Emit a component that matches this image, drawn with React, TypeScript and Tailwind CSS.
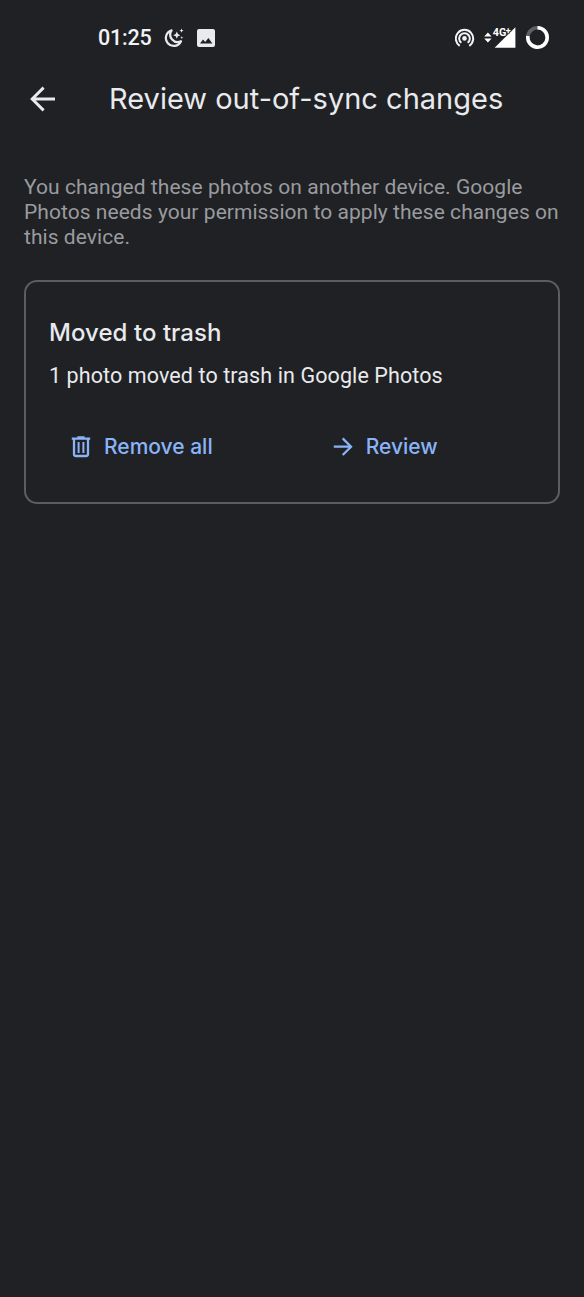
import type { ReactNode } from "react";

const MoonIcon = () => (
  <svg width="20" height="20" viewBox="0 0 20 20" fill="none">
    <path
      d="M7.6 2.4A7.9 7.9 0 1 0 17 13.2A7.4 7.4 0 0 1 7.6 2.4Z"
      stroke="#e8eaed"
      strokeWidth="2.2"
      strokeLinejoin="round"
    />
    <path
      d="M12.8 3.6l1.1 2.5 2.5 1.1-2.5 1.1-1.1 2.5-1.1-2.5-2.5-1.1 2.5-1.1zM17.5.6l.6 1.5 1.5.6-1.5.6-.6 1.5-.6-1.5-1.5-.6 1.5-.6zM17.8 8l.4 1.2 1.2.4-1.2.4-.4 1.2-.4-1.2-1.2-.4 1.2-.4z"
      fill="#e8eaed"
    />
  </svg>
);

const PictureIcon = () => (
  <svg width="18" height="18" viewBox="0 0 18 18">
    <path
      fillRule="evenodd"
      fill="#e8eaed"
      d="M2 0h14a2 2 0 0 1 2 2v14a2 2 0 0 1-2 2H2a2 2 0 0 1-2-2V2a2 2 0 0 1 2-2zM3 14.4h12.4l-4-5.4-3.2 4-2.2-2.6z"
    />
  </svg>
);

const HotspotIcon = () => (
  <svg width="20" height="20" viewBox="0 0 20 20" fill="none">
    <circle cx="9.5" cy="10.4" r="2.3" fill="#f1f3f4" />
    <path
      d="M6.4 14.8a5.3 5.3 0 1 1 6.2 0M4.7 17.8a8.7 8.7 0 1 1 9.6 0"
      stroke="#f1f3f4"
      strokeWidth="2"
    />
  </svg>
);

const SignalIcon = () => (
  <svg width="33" height="22" viewBox="0 0 33 22" fill="#fff">
    <path d="M3.9 5.4l3.7 4.2H.2zM3.9 15.6l3.7-4.2H.2z" />
    <path d="M31.4.2v20.6H10.6z" />
    <text
      x="8.8"
      y="8.7"
      fontFamily="Roboto, sans-serif"
      fontSize="10.8"
      fontWeight="700"
      stroke="#202124"
      strokeWidth="1.4"
      paintOrder="stroke"
    >
      4G
      <tspan dx="-0.6" dy="-1.8" fontSize="9">
        +
      </tspan>
    </text>
  </svg>
);

const BatteryIcon = () => (
  <svg width="24" height="24" viewBox="0 0 24 24" fill="none" strokeWidth="3.6">
    <circle cx="11.5" cy="11.5" r="9.7" stroke="#5f6063" />
    <path d="M11.5 1.8A9.7 9.7 0 1 1 1.9 10.1" stroke="#fff" />
  </svg>
);

const TrashIcon = () => (
  <svg width="20" height="22" viewBox="0 0 20 22" fill="none" stroke="#8ab4f8">
    <path
      d="M.8 2.6h18.4M6.4 1.4h7.2M3 3v15a2 2 0 0 0 2 2h10a2 2 0 0 0 2-2V3"
      strokeWidth="2.3"
    />
    <path d="M7.6 6v11M12.4 6v11" strokeWidth="2" />
  </svg>
);

const ArrowRightIcon = () => (
  <svg width="20" height="20" viewBox="0 0 20 20" fill="none">
    <path
      d="M.8 9.7h16.8M9.7 1.4l8.3 8.3-8.3 8.3"
      stroke="#8ab4f8"
      strokeWidth="2.3"
    />
  </svg>
);

const CardAction = ({ icon, label }: { icon: ReactNode; label: string }) => (
  <button className="flex items-center gap-[13px] text-[#8ab4f8]">
    {icon}
    <span className="font-[Inter,sans-serif] text-[21px] leading-7 font-medium whitespace-nowrap">
      {label}
    </span>
  </button>
);

export default function App() {
  return (
    <div className="flex h-[1297px] w-[584px] flex-col overflow-hidden bg-[#202124] font-[Roboto,sans-serif] text-[#e8eaed]">
      {/* Status bar */}
      <div className="flex h-[75px] items-center pr-[34px] pl-[98px]">
        <span className="w-[66px] text-[21.5px] leading-7 font-medium tracking-[-0.2px] text-[#f1f3f4]">
          01:25
        </span>
        <MoonIcon />
        <div className="ml-[13px]">
          <PictureIcon />
        </div>
        <div className="ml-auto flex items-center">
          <HotspotIcon />
          <div className="ml-[9px]">
            <SignalIcon />
          </div>
          <div className="ml-[9px]">
            <BatteryIcon />
          </div>
        </div>
      </div>

      {/* App bar */}
      <header className="flex h-12 items-center pl-[30px]">
        <svg width="26" height="26" viewBox="0 0 26 26" fill="none">
          <path
            d="M25 13H3M13.6 1.6L2.2 13l11.4 11.4"
            stroke="#e8eaed"
            strokeWidth="2.9"
          />
        </svg>
        <h1 className="ml-[53px] font-[Inter,sans-serif] text-[29px] leading-9 whitespace-nowrap">
          Review out-of-sync changes
        </h1>
      </header>

      <main className="px-6 pt-[52px]">
        <p className="text-[21px] leading-[25px] tracking-[0.05px] whitespace-nowrap text-[#999b9f]">
          You changed these photos on another device. Google
          <br />
          Photos needs your permission to apply these changes on
          <br />
          this device.
        </p>

        <section className="mt-[30px] h-[224px] rounded-[13px] border-2 border-[#5a5d61] px-[23px] pt-[35px]">
          <h2 className="font-[Inter,sans-serif] text-[24px] leading-8 font-medium tracking-[0.05px]">
            Moved to trash
          </h2>
          <p className="mt-[13px] text-[21.5px] leading-7 tracking-[0.1px]">
            1 photo moved to trash in Google Photos
          </p>
          <div className="mt-[43px] flex gap-[120px] pl-[22px]">
            <CardAction icon={<TrashIcon />} label="Remove all" />
            <CardAction icon={<ArrowRightIcon />} label="Review" />
          </div>
        </section>
      </main>
    </div>
  );
}
